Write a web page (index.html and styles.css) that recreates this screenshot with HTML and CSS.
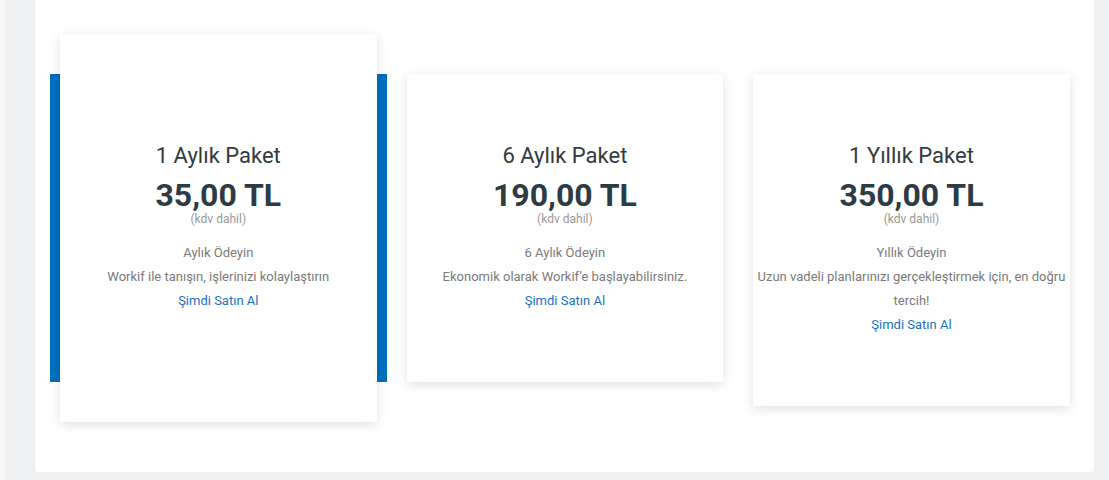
FILE: index.html
```html
<!DOCTYPE html>
<html lang="tr">
<head>
    <meta charset="UTF-8">
    <title>Workif Paketler</title>
    <link rel="stylesheet" href="styles.css">
</head>
<body>
    <div class="side-edge"></div>
    <div class="content">
        <div class="panel">
            <div class="plans">
                <div class="featured">
                    <div class="plan">
                        <h3 class="plan-title">1 Aylık Paket</h3>
                        <div class="plan-price">35,00 TL</div>
                        <div class="plan-tax">(kdv dahil)</div>
                        <p class="plan-period">Aylık Ödeyin</p>
                        <p class="plan-desc">Workif ile tanışın, işlerinizi kolaylaştırın</p>
                        <a class="plan-buy" href="#">Şimdi Satın Al</a>
                    </div>
                </div>
                <div class="plan">
                    <h3 class="plan-title">6 Aylık Paket</h3>
                    <div class="plan-price">190,00 TL</div>
                    <div class="plan-tax">(kdv dahil)</div>
                    <p class="plan-period">6 Aylık Ödeyin</p>
                    <p class="plan-desc">Ekonomik olarak Workif’e başlayabilirsiniz.</p>
                    <a class="plan-buy" href="#">Şimdi Satın Al</a>
                </div>
                <div class="plan">
                    <h3 class="plan-title">1 Yıllık Paket</h3>
                    <div class="plan-price">350,00 TL</div>
                    <div class="plan-tax">(kdv dahil)</div>
                    <p class="plan-period">Yıllık Ödeyin</p>
                    <p class="plan-desc">Uzun vadeli planlarınızı gerçekleştirmek için, en doğru tercih!</p>
                    <a class="plan-buy" href="#">Şimdi Satın Al</a>
                </div>
            </div>
        </div>
    </div>
</body>
</html>
```

FILE: styles.css
```css
body {
    margin: 0;
    display: flex;
    min-height: 480px;
    background: #eff0f2;
    font-family: Roboto, "Liberation Sans", sans-serif;
    overflow: hidden;
}
.side-edge { width: 5px; background: #f8f8f9; }
.content { flex: 1; padding: 0 15px 8px 30px; }
.panel {
    background: #fff;
    border-radius: 0 0 4px 4px;
    padding: 74px 24px 66px 25px;
}
.plans { display: flex; align-items: flex-start; gap: 30px; }
.plan {
    width: 316.6px;
    background: #fff;
    box-shadow: 0 3px 10px rgba(0, 0, 0, 0.12);
    padding: 69px 4px 69px;
    box-sizing: border-box;
    text-align: center;
}
.featured {
    background: #0070bf;
    padding: 0 10px;
    margin-left: -10px;
    margin-right: -10px;
}
.featured .plan {
    margin: -40px 0;
    padding-top: 109px;
    padding-bottom: 109px;
}
.plan-title {
    margin: 0;
    font-size: 22px;
    font-weight: 400;
    line-height: 26px;
    color: #333a40;
}
.plan-price {
    margin-top: 7px;
    font-size: 32px;
    font-weight: 700;
    line-height: 38px;
    color: #2d3b45;
}
.plan-tax {
    margin-top: -2px;
    font-size: 12px;
    line-height: 14px;
    color: #999;
}
.plan-period {
    margin: 15px 0 0;
    font-size: 13px;
    line-height: 24px;
    color: #7a7a7a;
}
.plan-desc {
    margin: 0;
    font-size: 13px;
    line-height: 24px;
    color: #7a7a7a;
}
.plan-buy {
    display: block;
    font-size: 13px;
    line-height: 24px;
    color: #1b72c2;
    text-decoration: none;
}
```
